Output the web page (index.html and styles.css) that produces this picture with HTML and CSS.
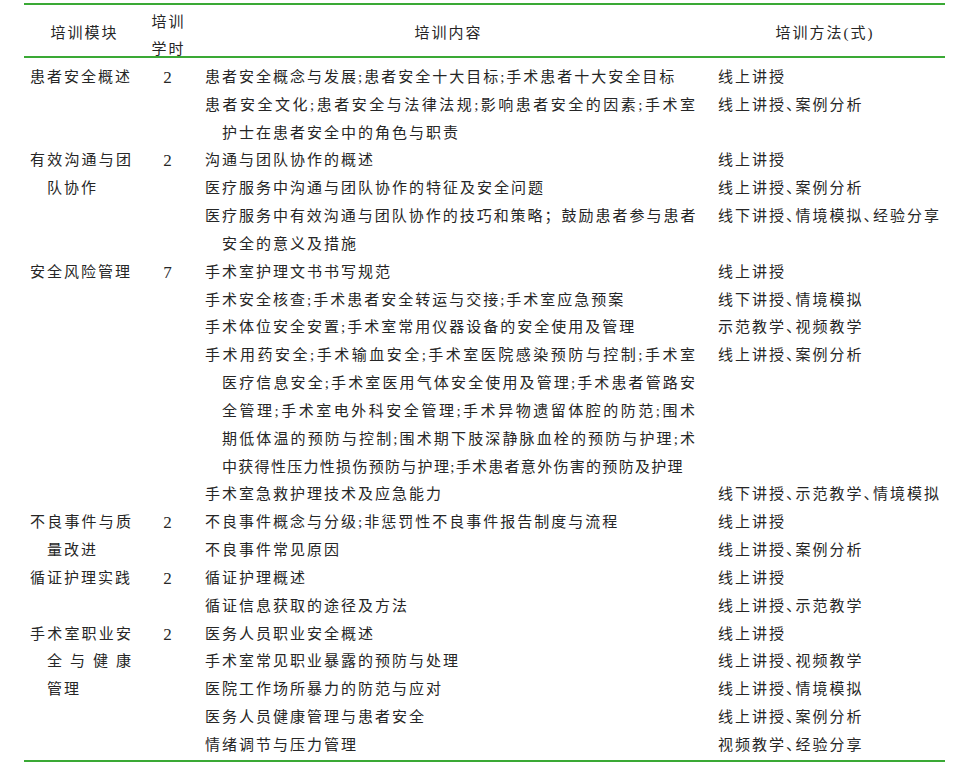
FILE: index.html
```html
<!DOCTYPE html>
<html lang="zh">
<head>
<meta charset="utf-8">
<link rel="stylesheet" href="styles.css">
</head>
<body>
<div class="wrap">
<table class="tbl">
<colgroup><col class="c1"><col class="c2"><col class="c3"><col class="c4"></colgroup>
<thead>
<tr>
<th class="h1"><div class="hc">培训模块</div></th>
<th class="h2"><div class="hc two">培训<br>学时</div></th>
<th class="h3"><div class="hc">培训内容</div></th>
<th class="h4"><div class="hc">培训方法(式)</div></th>
</tr>
</thead>
<tbody>
<tr class="spacer"><td colspan="4"></td></tr>

<tr>
<td class="mod" rowspan="2">患者安全概述</td>
<td class="hrs" rowspan="2">2</td>
<td class="cnt">患者安全概念与发展;患者安全十大目标;手术患者十大安全目标</td>
<td class="mth">线上讲授</td>
</tr>
<tr>
<td class="cnt"><span class="ln fill">患者安全文化;患者安全与法律法规;影响患者安全的因素;手术室</span><span class="ln cont">护士在患者安全中的角色与职责</span></td>
<td class="mth">线上讲授、案例分析</td>
</tr>

<tr>
<td class="mod" rowspan="3"><span class="ln fill">有效沟通与团</span><span class="ln cont">队协作</span></td>
<td class="hrs" rowspan="3">2</td>
<td class="cnt">沟通与团队协作的概述</td>
<td class="mth">线上讲授</td>
</tr>
<tr>
<td class="cnt">医疗服务中沟通与团队协作的特征及安全问题</td>
<td class="mth">线上讲授、案例分析</td>
</tr>
<tr>
<td class="cnt"><span class="ln fill semi">医疗服务中有效沟通与团队协作的技巧和策略；鼓励患者参与患者</span><span class="ln cont">安全的意义及措施</span></td>
<td class="mth">线下讲授、情境模拟、经验分享</td>
</tr>

<tr>
<td class="mod" rowspan="5">安全风险管理</td>
<td class="hrs" rowspan="5">7</td>
<td class="cnt">手术室护理文书书写规范</td>
<td class="mth">线上讲授</td>
</tr>
<tr>
<td class="cnt">手术安全核查;手术患者安全转运与交接;手术室应急预案</td>
<td class="mth">线下讲授、情境模拟</td>
</tr>
<tr>
<td class="cnt">手术体位安全安置;手术室常用仪器设备的安全使用及管理</td>
<td class="mth">示范教学、视频教学</td>
</tr>
<tr>
<td class="cnt"><span class="ln fill">手术用药安全;手术输血安全;手术室医院感染预防与控制;手术室</span><span class="ln cont fill">医疗信息安全;手术室医用气体安全使用及管理;手术患者管路安</span><span class="ln cont fill">全管理;手术室电外科安全管理;手术异物遗留体腔的防范;围术</span><span class="ln cont fill">期低体温的预防与控制;围术期下肢深静脉血栓的预防与护理;术</span><span class="ln cont tight">中获得性压力性损伤预防与护理;手术患者意外伤害的预防及护理</span></td>
<td class="mth">线上讲授、案例分析</td>
</tr>
<tr>
<td class="cnt">手术室急救护理技术及应急能力</td>
<td class="mth">线下讲授、示范教学、情境模拟</td>
</tr>

<tr>
<td class="mod" rowspan="2"><span class="ln fill">不良事件与质</span><span class="ln cont">量改进</span></td>
<td class="hrs" rowspan="2">2</td>
<td class="cnt">不良事件概念与分级;非惩罚性不良事件报告制度与流程</td>
<td class="mth">线上讲授</td>
</tr>
<tr>
<td class="cnt">不良事件常见原因</td>
<td class="mth">线上讲授、案例分析</td>
</tr>

<tr>
<td class="mod" rowspan="2">循证护理实践</td>
<td class="hrs" rowspan="2">2</td>
<td class="cnt">循证护理概述</td>
<td class="mth">线上讲授</td>
</tr>
<tr>
<td class="cnt">循证信息获取的途径及方法</td>
<td class="mth">线上讲授、示范教学</td>
</tr>

<tr>
<td class="mod" rowspan="5"><span class="ln fill">手术室职业安</span><span class="ln cont fill">全与健康</span><span class="ln cont">管理</span></td>
<td class="hrs" rowspan="5">2</td>
<td class="cnt">医务人员职业安全概述</td>
<td class="mth">线上讲授</td>
</tr>
<tr>
<td class="cnt">手术室常见职业暴露的预防与处理</td>
<td class="mth">线上讲授、视频教学</td>
</tr>
<tr>
<td class="cnt">医院工作场所暴力的防范与应对</td>
<td class="mth">线上讲授、情境模拟</td>
</tr>
<tr>
<td class="cnt">医务人员健康管理与患者安全</td>
<td class="mth">线上讲授、案例分析</td>
</tr>
<tr>
<td class="cnt">情绪调节与压力管理</td>
<td class="mth">视频教学、经验分享</td>
</tr>
</tbody>
</table>
</div>
</body>
</html>
```

FILE: styles.css
```css
html, body {
  margin: 0;
  padding: 0;
  background: #ffffff;
}

body {
  font-family: "Liberation Serif", "Noto Sans CJK SC", serif;
  font-size: 15px;
  color: #262626;
  letter-spacing: 2px;
}

.wrap {
  margin: 3px 0 0 24px;
  width: 921px;
  border-bottom: 2px solid #3aa935;
}

.tbl {
  width: 921px;
  table-layout: fixed;
  border-collapse: separate;
  border-spacing: 0;
}

.c1 { width: 121px; }
.c2 { width: 47px; }
.c3 { width: 513px; }
.c4 { width: 240px; }

.tbl th {
  height: 51px;
  padding: 0;
  font-weight: normal;
  vertical-align: top;
  border-top: 2px solid #3aa935;
  border-bottom: 2px solid #3aa935;
  text-align: center;
}

.hc {
  box-sizing: border-box;
  height: 51px;
  padding-top: 14.5px;
  line-height: 27px;
  white-space: nowrap;
}

.hc.two {
  padding-top: 3.5px;
}

.h1 { padding-left: 6px; padding-right: 12px; }
.h3 { padding-left: 13px; padding-right: 8px; }
.h4 { padding-left: 13px; }

.spacer td {
  height: 6px;
  padding: 0;
  line-height: 0;
}

.tbl td {
  padding: 0;
  vertical-align: top;
  line-height: 27.83px;
}

.mod {
  padding-left: 6px !important;
  padding-right: 12px !important;
  text-align: justify;
}

.hrs {
  text-align: center;
  font-size: 17px;
}

.cnt {
  padding-left: 13px !important;
  padding-right: 8px !important;
  text-align: left;
}

.mth {
  padding-left: 13px !important;
  white-space: nowrap;
  font-feature-settings: "halt";
}

.ln {
  display: block;
}

.fill {
  text-align: justify;
  text-align-last: justify;
  white-space: nowrap;
}

.semi {
  letter-spacing: 1.6px;
}

.cont {
  padding-left: 17px;
}

.tight {
  letter-spacing: 1.3px;
  white-space: nowrap;
}
```
